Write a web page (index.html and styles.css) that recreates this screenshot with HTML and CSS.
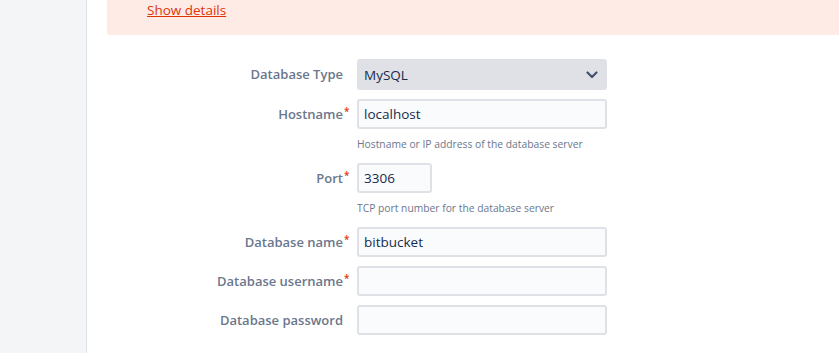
FILE: index.html
```html
<!DOCTYPE html>
<html lang="en">
<head>
    <meta charset="utf-8">
    <title>Database setup</title>
    <link rel="stylesheet" href="styles.css">
</head>
<body>
    <div class="layout">
        <aside class="sidebar"></aside>

        <main class="content">
            <div class="warning">
                <a href="#" class="details">Show details</a>
            </div>

            <form class="db-form">
                <label class="label" for="dbType">Database Type</label>
                <div class="field">
                    <div class="select-wrap">
                        <select id="dbType" class="select">
                            <option>MySQL</option>
                            <option>PostgreSQL</option>
                            <option>Oracle</option>
                        </select>
                        <svg class="chevron" width="12" height="8" viewBox="0 0 12 8">
                            <path d="M1.5 1.5 L6 6 L10.5 1.5" fill="none" stroke="#42526e" stroke-width="2.2" stroke-linecap="round" stroke-linejoin="round"/>
                        </svg>
                    </div>
                </div>

                <label class="label" for="host">Hostname<span class="req">*</span></label>
                <div class="field">
                    <input id="host" class="text" type="text" value="localhost">
                    <div class="help">Hostname or IP address of the database server</div>
                </div>

                <label class="label" for="port">Port<span class="req">*</span></label>
                <div class="field">
                    <input id="port" class="text short" type="text" value="3306">
                    <div class="help">TCP port number for the database server</div>
                </div>

                <label class="label" for="dbName">Database name<span class="req">*</span></label>
                <div class="field">
                    <input id="dbName" class="text" type="text" value="bitbucket">
                </div>

                <label class="label" for="dbUser">Database username<span class="req">*</span></label>
                <div class="field">
                    <input id="dbUser" class="text" type="text">
                </div>

                <label class="label" for="dbPass">Database password</label>
                <div class="field">
                    <input id="dbPass" class="text" type="password">
                </div>
            </form>
        </main>
    </div>
</body>
</html>
```

FILE: styles.css
```css
body {
    margin: 0;
    font-family: "Open Sans", "Noto Sans", sans-serif;
    font-size: 13.5px;
    color: #172b4d;
    background-color: #fff;
}

.layout {
    display: flex;
    min-height: 100vh;
}

.sidebar {
    width: 86px;
    flex-shrink: 0;
    background-color: #f4f5f7;
    border-right: 1px solid #dfe1e6;
}

.content {
    flex: 1;
    padding-left: 20px;
}

.warning {
    background-color: #ffebe6;
    border-bottom-left-radius: 3px;
    height: 35px;
    padding-left: 40px;
    box-sizing: border-box;
}

.details {
    display: inline-block;
    line-height: 20px;
    color: #de350b;
    text-decoration: underline;
}

.db-form {
    display: grid;
    grid-template-columns: 236px 250px;
    column-gap: 14px;
    row-gap: 9px;
    margin-top: 24px;
}

.label {
    position: relative;
    text-align: right;
    font-size: 13px;
    font-weight: 600;
    color: #6b778c;
    line-height: 30px;
    justify-self: end;
}

.req {
    position: absolute;
    left: 100%;
    top: -3px;
    margin-left: 1px;
    color: #de350b;
    font-size: 10px;
}

.field {
    display: flex;
    flex-direction: column;
}

.select-wrap {
    position: relative;
}

.select {
    appearance: none;
    width: 100%;
    height: 31px;
    border: none;
    border-radius: 3px;
    background-color: #dfe1e6;
    padding: 0 7px;
    font: inherit;
    color: #172b4d;
}

.chevron {
    position: absolute;
    right: 9px;
    top: 12px;
    pointer-events: none;
}

.text {
    box-sizing: border-box;
    width: 100%;
    height: 30px;
    border: 2px solid #dfe1e6;
    border-radius: 3px;
    background-color: #fafbfc;
    padding: 0 5px;
    font: inherit;
    color: #172b4d;
}

.short {
    width: 75px;
}

.help {
    padding: 7px 0 2px;
    line-height: 16px;
    font-size: 10.3px;
    color: #6b778c;
}
```
